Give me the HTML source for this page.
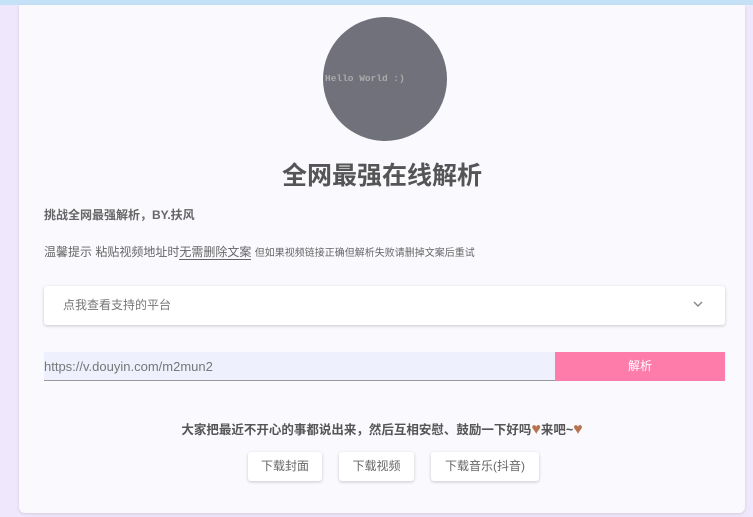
<!DOCTYPE html>
<html><head><meta charset="utf-8"><style>
*{margin:0;padding:0;box-sizing:border-box}
body{width:753px;height:517px;overflow:hidden;background:#efe7fb;font-family:"Liberation Sans","Noto Sans CJK SC",sans-serif;position:relative}
.top{position:absolute;left:0;top:0;width:753px;height:5px;background:#c4e1f7}
.card{position:absolute;left:19px;top:5px;width:726px;height:508px;background:#faf9fe;border-radius:0 0 6px 6px;box-shadow:0 1px 3px rgba(0,0,0,.12)}
.circ{position:absolute;left:304px;top:12px;width:124px;height:124px;border-radius:50%;background:#71717b;color:#aaa;font-family:"Liberation Mono",monospace;font-size:9.5px;font-weight:bold;line-height:124px;padding-left:2px}
h1{position:absolute;left:0;width:726px;top:151px;text-align:center;font-size:25px;color:#555;font-weight:bold}
.t{position:absolute;left:25px;font-size:12px;color:#666;white-space:nowrap}
.panel{position:absolute;left:25px;top:281px;width:681px;height:39px;background:#fff;box-shadow:0 1px 3px rgba(0,0,0,.2);border-radius:3px;font-size:12px;color:#777;line-height:39px;padding-left:19px}
.panel svg{position:absolute;right:22px;top:15px}
.inp{position:absolute;left:25px;top:347px;width:511px;height:29px;background:#eef0fd;border-bottom:1px solid #999;font-size:13px;color:#777;line-height:29px}
.btn{position:absolute;left:536px;top:347px;width:170px;height:29px;background:#fd7ca9;color:#fff;font-size:12px;text-align:center;line-height:29px}
.b{position:absolute;top:447px;height:29px;background:#fff;box-shadow:0 1px 3px rgba(0,0,0,.2);border-radius:3px;font-size:12px;color:#666;text-align:center;line-height:29px}
.h{color:#b8744f;font-size:16px;line-height:12px}
</style></head><body>
<div class="top"></div>
<div class="card">
<div class="circ">Hello World :)</div>
<h1>全网最强在线解析</h1>
<div class="t" style="top:201px;font-weight:bold">挑战全网最强解析，BY.扶风</div>
<div class="t" style="top:238px">温馨提示 粘贴视频地址时<span style="border-bottom:1px solid #666">无需删除文案</span> <span style="font-size:10px">但如果视频链接正确但解析失败请删掉文案后重试</span></div>
<div class="panel">点我查看支持的平台<svg width="10" height="7" viewBox="0 0 10 7"><path d="M1 1l4 4 4-4" stroke="#888" stroke-width="1.4" fill="none"/></svg></div>
<div class="inp">https://v.douyin.com/m2mun2</div>
<div class="btn">解析</div>
<div class="t" style="left:0;width:726px;text-align:center;top:414px;font-weight:bold;color:#555;font-size:12.5px">大家把最近不开心的事都说出来，然后互相安慰、鼓励一下好吗<span class="h">♥</span>来吧~<span class="h">♥</span></div>
<div class="b" style="left:229px;width:74px">下载封面</div>
<div class="b" style="left:320px;width:75px">下载视频</div>
<div class="b" style="left:412px;width:108px">下载音乐(抖音)</div>
</div>
</body></html>
